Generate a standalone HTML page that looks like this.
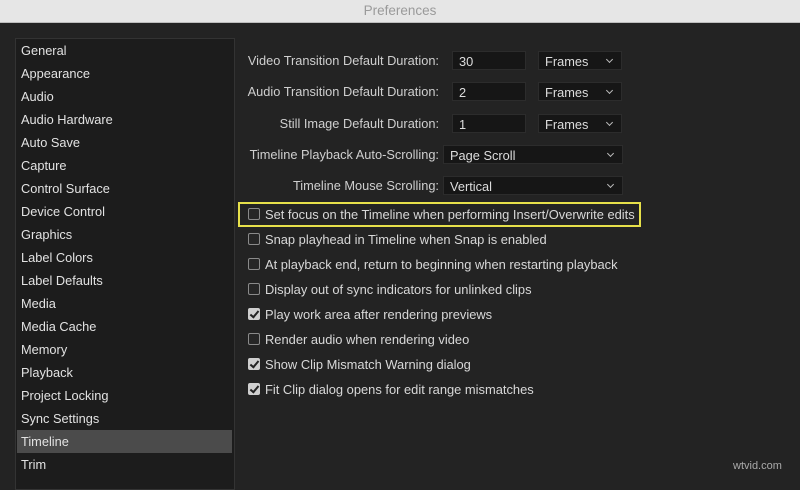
<!DOCTYPE html><html><head><style>
body{margin:0;width:800px;height:478px;background:#232323;font-family:"Liberation Sans",sans-serif;overflow:hidden;position:relative}
.tb{position:absolute;left:0;top:0;width:800px;height:22px;background:#e6e6e6;border-bottom:1px solid #bdbdbd;text-align:center;font-size:13.5px;line-height:22px;color:#9a9a9a}
.sb{position:absolute;left:15px;top:38px;width:218px;height:450px;background:#1c1c1c;border:1px solid #333}
.it{position:absolute;left:5px;font-size:12.8px;color:#e2e2e2}
.sel{position:absolute;left:1px;top:391px;width:215px;height:23px;background:#4b4b4b}
.lb{position:absolute;font-size:12.8px;color:#cfcfcf;text-align:right;right:361px}
.in{position:absolute;background:#161616;border:1px solid #2c2c2c;height:19px;font-size:12.8px;color:#ddd;line-height:19px;padding-left:6px;box-sizing:border-box}
.dd::after{content:"";position:absolute;right:9px;top:5px;width:4px;height:4px;border-right:1.3px solid #bbb;border-bottom:1.3px solid #bbb;transform:rotate(45deg)}
.cb{position:absolute;left:248px;width:12px;height:12px;border:1px solid #8a8a8a;border-radius:2px;box-sizing:border-box;background:#262626}
.ck{background:#cfcfcf;border-color:#cfcfcf}
.ck::after{content:"";position:absolute;left:3px;top:0px;width:3px;height:7px;border-right:2px solid #222;border-bottom:2px solid #222;transform:rotate(40deg)}
.ct{position:absolute;left:265px;font-size:12.9px;color:#d8d8d8}
</style></head><body>
<div class="tb">Preferences</div>
<div class="sb"><div class="sel"></div>
<div class="it" style="top:4px">General</div><div class="it" style="top:27px">Appearance</div><div class="it" style="top:50px">Audio</div><div class="it" style="top:73px">Audio Hardware</div><div class="it" style="top:96px">Auto Save</div><div class="it" style="top:119px">Capture</div><div class="it" style="top:142px">Control Surface</div><div class="it" style="top:165px">Device Control</div><div class="it" style="top:188px">Graphics</div><div class="it" style="top:211px">Label Colors</div><div class="it" style="top:234px">Label Defaults</div><div class="it" style="top:257px">Media</div><div class="it" style="top:280px">Media Cache</div><div class="it" style="top:303px">Memory</div><div class="it" style="top:326px">Playback</div><div class="it" style="top:349px">Project Locking</div><div class="it" style="top:372px">Sync Settings</div><div class="it" style="top:395px">Timeline</div><div class="it" style="top:418px">Trim</div>
</div>
<div class="lb" style="top:53px">Video Transition Default Duration:</div>
<div class="lb" style="top:84px">Audio Transition Default Duration:</div>
<div class="lb" style="top:116px">Still Image Default Duration:</div>
<div class="lb" style="top:147px">Timeline Playback Auto-Scrolling:</div>
<div class="lb" style="top:178px">Timeline Mouse Scrolling:</div>
<div class="in" style="left:452px;top:51px;width:74px">30</div>
<div class="in" style="left:452px;top:82px;width:74px">2</div>
<div class="in" style="left:452px;top:114px;width:74px">1</div>
<div class="in dd" style="left:538px;top:51px;width:84px">Frames</div>
<div class="in dd" style="left:538px;top:82px;width:84px">Frames</div>
<div class="in dd" style="left:538px;top:114px;width:84px">Frames</div>
<div class="in dd" style="left:443px;top:145px;width:180px">Page Scroll</div>
<div class="in dd" style="left:443px;top:176px;width:180px">Vertical</div>
<div style="position:absolute;left:238px;top:202px;width:403px;height:25px;border:2px solid #e6e04a;box-sizing:border-box"></div>
<div class="cb" style="top:208px"></div><div class="ct" style="top:207px">Set focus on the Timeline when performing Insert/Overwrite edits</div>
<div class="cb" style="top:233px"></div><div class="ct" style="top:232px">Snap playhead in Timeline when Snap is enabled</div>
<div class="cb" style="top:258px"></div><div class="ct" style="top:257px">At playback end, return to beginning when restarting playback</div>
<div class="cb" style="top:283px"></div><div class="ct" style="top:282px">Display out of sync indicators for unlinked clips</div>
<div class="cb ck" style="top:308px"></div><div class="ct" style="top:307px">Play work area after rendering previews</div>
<div class="cb" style="top:333px"></div><div class="ct" style="top:332px">Render audio when rendering video</div>
<div class="cb ck" style="top:358px"></div><div class="ct" style="top:357px">Show Clip Mismatch Warning dialog</div>
<div class="cb ck" style="top:383px"></div><div class="ct" style="top:382px">Fit Clip dialog opens for edit range mismatches</div>
<div style="position:absolute;left:733px;top:460px;font-size:11px;color:#aaa">wtvid.com</div>
</body></html>
